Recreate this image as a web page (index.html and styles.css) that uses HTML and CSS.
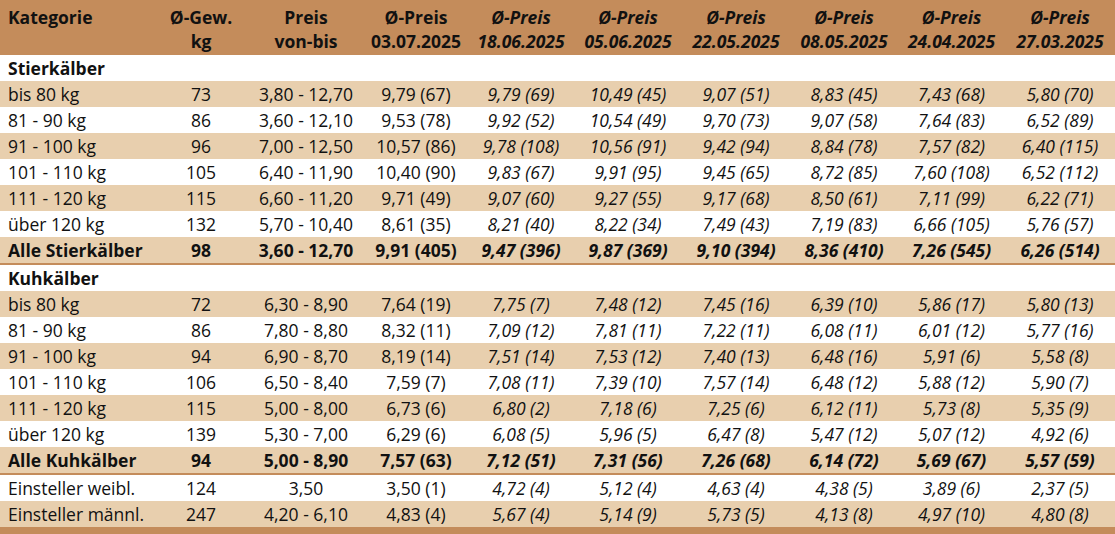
FILE: index.html
```html
<!DOCTYPE html>
<html>
<head>
<meta charset="utf-8">
<link rel="stylesheet" href="styles.css">
</head>
<body>
<table class="preise">
<colgroup>
<col class="c1"><col class="c2"><col class="c3"><col class="c4"><col class="c5"><col class="c6"><col class="c7"><col class="c8"><col class="c9"><col class="c10">
</colgroup>
<thead>
<tr>
<th class="kat">Kategorie</th>
<th>Ø-Gew.<br>kg</th>
<th>Preis<br>von-bis</th>
<th>Ø-Preis<br>03.07.2025</th>
<th class="it">Ø-Preis<br>18.06.2025</th>
<th class="it">Ø-Preis<br>05.06.2025</th>
<th class="it">Ø-Preis<br>22.05.2025</th>
<th class="it">Ø-Preis<br>08.05.2025</th>
<th class="it">Ø-Preis<br>24.04.2025</th>
<th class="it">Ø-Preis<br>27.03.2025</th>
</tr>
</thead>
<tbody>
<tr class="group w"><td colspan="10">Stierkälber</td></tr>
<tr class="b"><td>bis 80 kg</td><td>73</td><td>3,80 - 12,70</td><td>9,79 (67)</td><td class="it">9,79 (69)</td><td class="it">10,49 (45)</td><td class="it">9,07 (51)</td><td class="it">8,83 (45)</td><td class="it">7,43 (68)</td><td class="it">5,80 (70)</td></tr>
<tr class="w"><td>81 - 90 kg</td><td>86</td><td>3,60 - 12,10</td><td>9,53 (78)</td><td class="it">9,92 (52)</td><td class="it">10,54 (49)</td><td class="it">9,70 (73)</td><td class="it">9,07 (58)</td><td class="it">7,64 (83)</td><td class="it">6,52 (89)</td></tr>
<tr class="b"><td>91 - 100 kg</td><td>96</td><td>7,00 - 12,50</td><td>10,57 (86)</td><td class="it">9,78 (108)</td><td class="it">10,56 (91)</td><td class="it">9,42 (94)</td><td class="it">8,84 (78)</td><td class="it">7,57 (82)</td><td class="it">6,40 (115)</td></tr>
<tr class="w"><td>101 - 110 kg</td><td>105</td><td>6,40 - 11,90</td><td>10,40 (90)</td><td class="it">9,83 (67)</td><td class="it">9,91 (95)</td><td class="it">9,45 (65)</td><td class="it">8,72 (85)</td><td class="it">7,60 (108)</td><td class="it">6,52 (112)</td></tr>
<tr class="b"><td>111 - 120 kg</td><td>115</td><td>6,60 - 11,20</td><td>9,71 (49)</td><td class="it">9,07 (60)</td><td class="it">9,27 (55)</td><td class="it">9,17 (68)</td><td class="it">8,50 (61)</td><td class="it">7,11 (99)</td><td class="it">6,22 (71)</td></tr>
<tr class="w"><td>über 120 kg</td><td>132</td><td>5,70 - 10,40</td><td>8,61 (35)</td><td class="it">8,21 (40)</td><td class="it">8,22 (34)</td><td class="it">7,49 (43)</td><td class="it">7,19 (83)</td><td class="it">6,66 (105)</td><td class="it">5,76 (57)</td></tr>
<tr class="b total"><td>Alle Stierkälber</td><td>98</td><td>3,60 - 12,70</td><td>9,91 (405)</td><td class="it">9,47 (396)</td><td class="it">9,87 (369)</td><td class="it">9,10 (394)</td><td class="it">8,36 (410)</td><td class="it">7,26 (545)</td><td class="it">6,26 (514)</td></tr>
<tr class="group w"><td colspan="10">Kuhkälber</td></tr>
<tr class="b"><td>bis 80 kg</td><td>72</td><td>6,30 - 8,90</td><td>7,64 (19)</td><td class="it">7,75 (7)</td><td class="it">7,48 (12)</td><td class="it">7,45 (16)</td><td class="it">6,39 (10)</td><td class="it">5,86 (17)</td><td class="it">5,80 (13)</td></tr>
<tr class="w"><td>81 - 90 kg</td><td>86</td><td>7,80 - 8,80</td><td>8,32 (11)</td><td class="it">7,09 (12)</td><td class="it">7,81 (11)</td><td class="it">7,22 (11)</td><td class="it">6,08 (11)</td><td class="it">6,01 (12)</td><td class="it">5,77 (16)</td></tr>
<tr class="b"><td>91 - 100 kg</td><td>94</td><td>6,90 - 8,70</td><td>8,19 (14)</td><td class="it">7,51 (14)</td><td class="it">7,53 (12)</td><td class="it">7,40 (13)</td><td class="it">6,48 (16)</td><td class="it">5,91 (6)</td><td class="it">5,58 (8)</td></tr>
<tr class="w"><td>101 - 110 kg</td><td>106</td><td>6,50 - 8,40</td><td>7,59 (7)</td><td class="it">7,08 (11)</td><td class="it">7,39 (10)</td><td class="it">7,57 (14)</td><td class="it">6,48 (12)</td><td class="it">5,88 (12)</td><td class="it">5,90 (7)</td></tr>
<tr class="b"><td>111 - 120 kg</td><td>115</td><td>5,00 - 8,00</td><td>6,73 (6)</td><td class="it">6,80 (2)</td><td class="it">7,18 (6)</td><td class="it">7,25 (6)</td><td class="it">6,12 (11)</td><td class="it">5,73 (8)</td><td class="it">5,35 (9)</td></tr>
<tr class="w"><td>über 120 kg</td><td>139</td><td>5,30 - 7,00</td><td>6,29 (6)</td><td class="it">6,08 (5)</td><td class="it">5,96 (5)</td><td class="it">6,47 (8)</td><td class="it">5,47 (12)</td><td class="it">5,07 (12)</td><td class="it">4,92 (6)</td></tr>
<tr class="b total"><td>Alle Kuhkälber</td><td>94</td><td>5,00 - 8,90</td><td>7,57 (63)</td><td class="it">7,12 (51)</td><td class="it">7,31 (56)</td><td class="it">7,26 (68)</td><td class="it">6,14 (72)</td><td class="it">5,69 (67)</td><td class="it">5,57 (59)</td></tr>
<tr class="w"><td>Einsteller weibl.</td><td>124</td><td>3,50</td><td>3,50 (1)</td><td class="it">4,72 (4)</td><td class="it">5,12 (4)</td><td class="it">4,63 (4)</td><td class="it">4,38 (5)</td><td class="it">3,89 (6)</td><td class="it">2,37 (5)</td></tr>
<tr class="b last"><td>Einsteller männl.</td><td>247</td><td>4,20 - 6,10</td><td>4,83 (4)</td><td class="it">5,67 (4)</td><td class="it">5,14 (9)</td><td class="it">5,73 (5)</td><td class="it">4,13 (8)</td><td class="it">4,97 (10)</td><td class="it">4,80 (8)</td></tr>
</tbody>
</table>
</body>
</html>
```

FILE: styles.css
```css
html, body {
  margin: 0;
  padding: 0;
  background: #ffffff;
}
.preise {
  width: 1115px;
  border-collapse: collapse;
  table-layout: fixed;
  font-family: "Open Sans", "DejaVu Sans", sans-serif;
  font-size: 17.5px;
  color: #111111;
}
.c1 { width: 154px; }
.c2 { width: 94px; }
.c3 { width: 116px; }
.c4 { width: 104px; }
.c5 { width: 106px; }
.c6 { width: 108px; }
.c7 { width: 108px; }
.c8 { width: 108px; }
.c9 { width: 107px; }
.c10 { width: 110px; }
.preise thead th {
  background: #c48c5b;
  color: #111111;
  font-weight: 700;
  line-height: 24px;
  padding: 5px 0 2px 0;
  height: 48px;
  text-align: center;
  vertical-align: top;
  white-space: nowrap;
}
.preise thead th.kat {
  text-align: left;
  padding-left: 8px;
}
.preise .it {
  font-style: italic;
}
.preise td {
  height: 26px;
  line-height: 26px;
  padding: 0;
  text-align: center;
  white-space: nowrap;
}
.preise td:first-child {
  text-align: left;
  padding-left: 8px;
}
.preise tr.w td { background: #ffffff; }
.preise tr.b td { background: #e8cfae; }
.preise tr.group td {
  font-weight: 700;
}
.preise tr.total td {
  font-weight: 700;
  border-bottom: 2px solid #c48c5b;
}
.preise tr.last td {
  border-bottom: 8px solid #c48c5b;
}
```
